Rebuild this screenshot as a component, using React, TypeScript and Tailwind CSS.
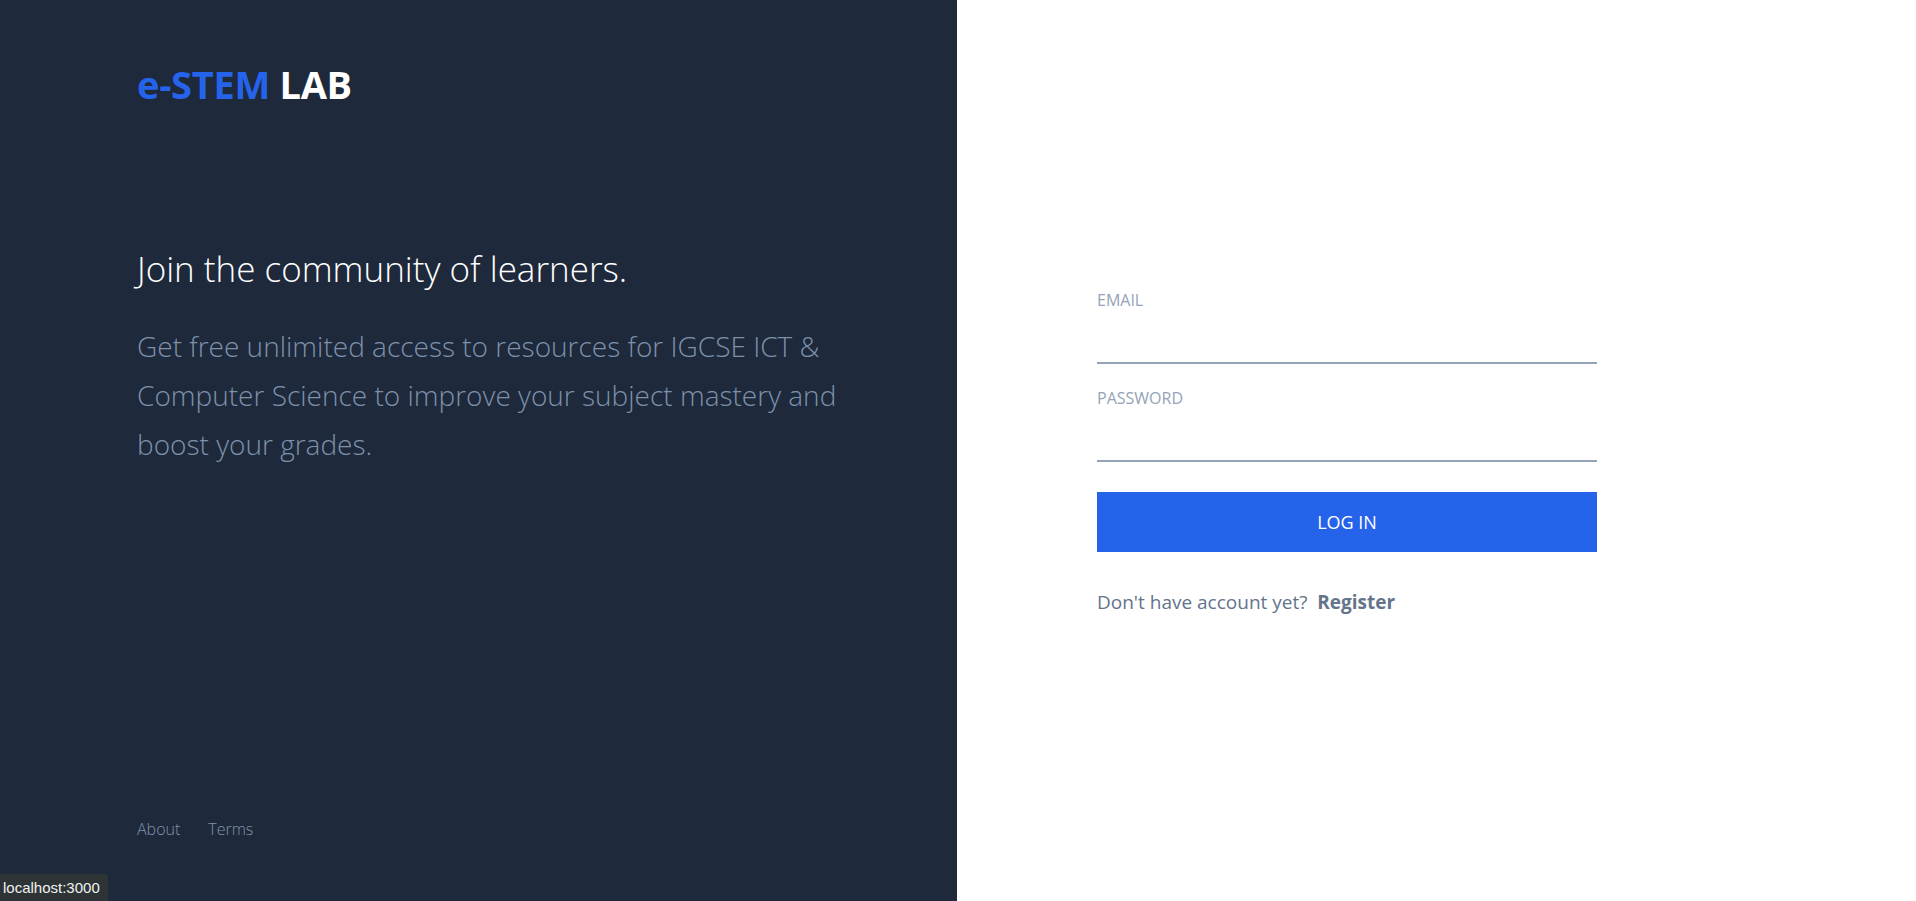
export default function App() {
    return (
        <div className="flex h-screen w-full font-['Open_Sans',sans-serif] relative">
            <div className="w-[957px] bg-[#1e293b] flex flex-col pl-[137px] pr-[60px] pt-[58px] pb-[60px]">
                <div className="text-[38px] font-bold leading-[52px] tracking-[-0.3px]">
                    <span className="text-[#2563eb]">e-STEM</span> <span className="text-white">LAB</span>
                </div>
                <div className="mt-[134px]">
                    <h1 className="text-[35px] font-light text-white leading-[50px]">Join the community of learners.</h1>
                    <p className="mt-[28px] text-[28px] font-light text-[#7d91ab] leading-[49px] max-w-[740px]">
                        Get free unlimited access to resources for IGCSE ICT &amp; Computer Science to improve your subject mastery and boost your grades.
                    </p>
                </div>
                <div className="mt-auto flex gap-7 text-[16px] text-[#8193ad] font-light">
                    <a href="#">About</a>
                    <a href="#">Terms</a>
                </div>
            </div>
            <div className="flex-1 bg-white flex items-center pl-[140px]">
                <form className="w-[500px] flex flex-col mt-[4px]">
                    <label className="text-[16px] text-[#94a3b8] leading-[22px]">EMAIL</label>
                    <input type="email" className="h-[53px] border-b-2 border-[#94a3b8] outline-none text-[18px] text-[#334155]" />
                    <label className="mt-[23px] text-[16px] text-[#94a3b8] leading-[22px]">PASSWORD</label>
                    <input type="password" className="h-[53px] border-b-2 border-[#94a3b8] outline-none text-[18px] text-[#334155]" />
                    <button type="button" className="mt-[30px] h-[60px] bg-[#2563eb] text-white text-[18px]">LOG IN</button>
                    <p className="mt-[36px] text-[19px] text-[#64748b] leading-[28px]">
                        Don't have account yet?&nbsp; <a href="#" className="font-bold">Register</a>
                    </p>
                </form>
            </div>
            <div className="absolute left-0 bottom-0 h-[27px] pl-[3px] pr-[8px] bg-[#2e3436] text-[#f1f1f1] text-[15px] leading-[27px] rounded-tr-[4px] font-['Liberation_Sans',sans-serif]">
                localhost:3000
            </div>
        </div>
    );
}
